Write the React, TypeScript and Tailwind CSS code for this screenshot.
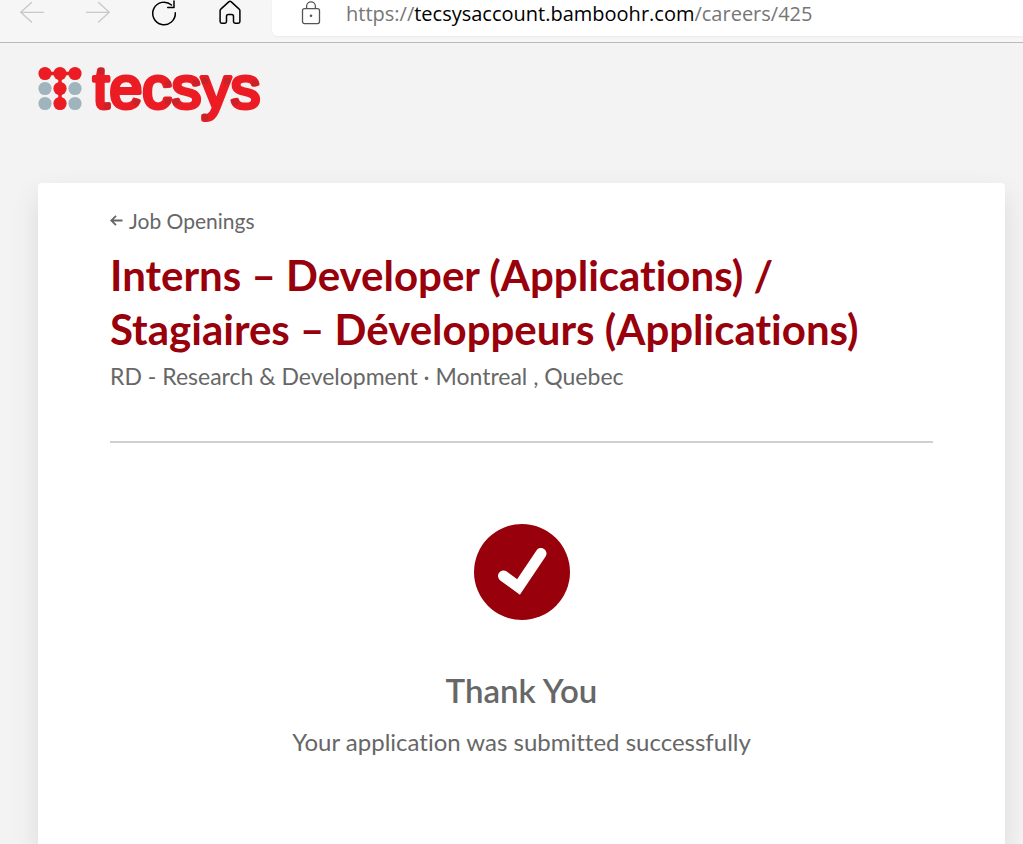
import type { ReactNode } from "react";

function ToolButton({ label, disabled, children }: { label: string; disabled?: boolean; children: ReactNode }) {
  return (
    <button
      type="button"
      aria-label={label}
      disabled={disabled}
      className="flex h-7 w-7 items-start justify-center text-black disabled:text-[#c8c8c8]"
    >
      <svg
        viewBox="0 0 28 28"
        className="h-7 w-7"
        fill="none"
        stroke="currentColor"
        strokeWidth="1.5"
        strokeLinecap="round"
        strokeLinejoin="round"
        aria-hidden="true"
      >
        {children}
      </svg>
    </button>
  );
}

function BrowserBar() {
  return (
    <div className="flex h-[43px] items-start border-b border-[#b9b9b9] bg-[#f6f6f6]">
      <div className="flex shrink-0 gap-[38px] pl-[18px]">
        <ToolButton label="Back" disabled>
          <path d="M25.5 12.3H2.7M13.5 2.5L2.7 12.3l10.8 9.8" strokeWidth="1.3" />
        </ToolButton>
        <ToolButton label="Forward" disabled>
          <path d="M2.5 12.3h22.8M14.5 2.5l10.8 9.8-10.8 9.8" strokeWidth="1.3" />
        </ToolButton>
        <ToolButton label="Refresh">
          <path d="M21.5 5A11.3 11.3 0 1 0 25.3 12.8" />
          <path d="M24 1V7.4H17.7" />
        </ToolButton>
        <ToolButton label="Home">
          <path d="M4.1 10.6a2 2 0 0 1 .7-1.5l7.9-7.2a2 2 0 0 1 2.6 0l7.9 7.2a2 2 0 0 1 .7 1.5v11a1.6 1.6 0 0 1-1.6 1.6h-3.2a1.6 1.6 0 0 1-1.6-1.6v-5.2a1.8 1.8 0 0 0-1.8-1.8h-3.4a1.8 1.8 0 0 0-1.8 1.8v5.2a1.6 1.6 0 0 1-1.6 1.6H5.7a1.6 1.6 0 0 1-1.6-1.6z" />
        </ToolButton>
      </div>
      <div className="ml-[28px] flex h-9 min-w-0 grow items-start rounded-bl-md bg-white pl-[28px] shadow-[0_1px_3px_rgba(0,0,0,0.05)]">
        <svg viewBox="0 0 22 26" className="h-[26px] w-[22px] shrink-0" fill="none" stroke="#555" strokeWidth="1.3" aria-hidden="true">
          <rect x="2.5" y="8.6" width="17" height="15" rx="2" />
          <path d="M6.6 8.4V6.2a4.4 4.4 0 0 1 8.8 0v2.2" />
          <circle cx="11" cy="15.7" r="1.3" fill="#555" stroke="none" />
        </svg>
        <div className="ml-6 truncate font-['Open_Sans','Noto_Sans',sans-serif] text-[20px] leading-7 text-[#767676]">
          https://<span className="text-black">tecsysaccount.bamboohr.com</span>/careers/425
        </div>
      </div>
    </div>
  );
}

const DARK_DOTS = [
  [63, 7], [69, 42], [98, 38], [130, 20], [130, 37], [138, 38],
  [158, 19], [167, 17], [167, 53], [189, 17], [197, 38], [217, 19],
];

function Logo() {
  return (
    <svg viewBox="0 -14 240 84" className="h-[84px] w-[240px]" role="img" aria-label="tecsys">
      <g fill="#9fb4bc">
        <circle cx="7" cy="24.5" r="6.6" />
        <circle cx="37" cy="24.5" r="6.6" />
        <circle cx="7" cy="39.5" r="6.6" />
        <circle cx="37" cy="39.5" r="6.6" />
      </g>
      <path d="M7 9.5h30M22 9.5v30" stroke="#ec1c24" strokeWidth="3.5" />
      <g fill="#ec1c24">
        <circle cx="7" cy="9.5" r="6.6" />
        <circle cx="22" cy="9.5" r="6.6" />
        <circle cx="37" cy="9.5" r="6.6" />
        <circle cx="22" cy="24.5" r="6.6" />
        <circle cx="22" cy="39.5" r="6.6" />
      </g>
      <text
        x="55"
        y="44"
        fill="#ec1c24"
        stroke="#ec1c24"
        strokeWidth="4"
        strokeLinejoin="round"
        className="font-['Liberation_Sans',Arial,sans-serif] text-[59px]"
      >
        tecsys
      </text>
      <g fill="#c8232a">
        {DARK_DOTS.map(([cx, cy]) => (
          <circle key={`${cx}-${cy}`} cx={cx} cy={cy} r="3.4" />
        ))}
      </g>
    </svg>
  );
}

export default function App() {
  return (
    <div className="flex min-h-screen flex-col bg-[#f3f3f3] font-[Lato,sans-serif] text-[#676767] [font-variant-ligatures:none]">
      <BrowserBar />
      <header className="pt-[7px] pl-[38px]">
        <Logo />
      </header>
      <main className="mt-[49px] mr-[18px] ml-[38px] grow rounded-t-sm bg-white px-[72px] pt-6 shadow-[0_12px_28px_rgba(0,0,0,0.10)]">
        <a href="#openings" className="flex items-center gap-[6px] text-[21px] leading-7">
          <svg viewBox="0 0 13 12" className="h-3 w-[13px]" fill="none" stroke="currentColor" strokeWidth="1.8" aria-hidden="true">
            <path d="M12.5 5.5H1.5M6 0.8L1.3 5.5L6 10.2" />
          </svg>
          Job Openings
        </a>
        <h1 className="mt-[13px] text-[42px] leading-[54px] font-bold text-[#98000b]">
          Interns – Developer (Applications) / <br />
          Stagiaires – Développeurs (Applications)
        </h1>
        <p className="mt-1 text-[23px] leading-8">RD - Research &amp; Development · Montreal , Quebec</p>
        <hr className="mt-[49px] border-t-2 border-[#d0d0d0]" />
        <section className="flex flex-col items-center pt-[81px] text-center">
          <svg viewBox="0 0 96 96" className="h-24 w-24" aria-hidden="true">
            <circle cx="48" cy="48" r="48" fill="#98000b" />
            <path d="M29.5 52L44.5 63L67 29.5" fill="none" stroke="#fff" strokeWidth="11" strokeLinecap="round" />
          </svg>
          <h2 className="mt-12 text-[33px] leading-[44px] font-semibold">Thank You</h2>
          <p className="mt-[14px] text-[24px] leading-8">Your application was submitted successfully</p>
        </section>
      </main>
    </div>
  );
}
